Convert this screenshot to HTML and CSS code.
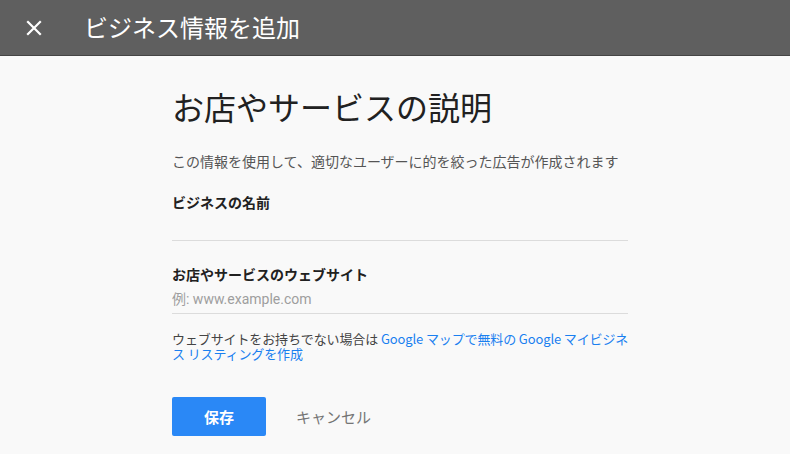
FILE: index.html
```html
<!DOCTYPE html>
<html lang="ja">
<head>
<meta charset="utf-8">
<link rel="stylesheet" href="styles.css">
</head>
<body>
<header class="topbar">
  <svg class="close" width="16" height="16" viewBox="0 0 16 16"><path d="M2 2L14 14M14 2L2 14" stroke="#fff" stroke-width="2.2" stroke-linecap="square"/></svg>
  <div class="topbar-title">ビジネス情報を追加</div>
</header>
<main class="form">
  <h1 class="heading">お店やサービスの説明</h1>
  <p class="lead">この情報を使用して、適切なユーザーに的を絞った広告が作成されます</p>
  <label class="label">ビジネスの名前</label>
  <input class="field field-name" type="text">
  <label class="label label-2">お店やサービスのウェブサイト</label>
  <input class="field field-url" type="text" placeholder="例: www.example.com">
  <p class="help">ウェブサイトをお持ちでない場合は <a class="link" href="#">Google マップで無料の Google マイビジネ<br>ス リスティングを作成</a></p>
  <div class="actions">
    <button class="btn-save">保存</button>
    <button class="btn-cancel">キャンセル</button>
  </div>
</main>
</body>
</html>
```
FILE: styles.css
```css
html, body {
  margin: 0;
  padding: 0;
  background: #f9f9f9;
  font-family: Roboto, "Noto Sans CJK JP", sans-serif;
  width: 790px;
  height: 454px;
  overflow: hidden;
}
.topbar {
  height: 55px;
  background: #5f5f5f;
  border-bottom: 1px solid #454545;
  display: flex;
  align-items: center;
}
.close {
  margin-left: 26px;
  flex: none;
}
.topbar-title {
  margin-left: 42px;
  color: #fff;
  font-size: 24px;
  font-weight: 400;
  line-height: 30px;
  margin-top: -2px;
  font-family: "Noto Sans CJK JP", sans-serif;
}
.form {
  margin-left: 172px;
  width: 456px;
  padding-top: 30px;
  display: flex;
  flex-direction: column;
}
.heading {
  margin: 0;
  font-size: 32px;
  line-height: 40px;
  font-weight: 400;
  color: #212121;
  font-family: "Noto Sans CJK JP", sans-serif;
}
.lead {
  margin: 26px 0 0;
  font-size: 14px;
  line-height: 20px;
  color: #555;
}
.label {
  margin-top: 21px;
  font-size: 14px;
  line-height: 20px;
  font-weight: 700;
  color: #212121;
}
.label-2 {
  margin-top: 24px;
}
.field {
  display: block;
  box-sizing: border-box;
  width: 456px;
  border: none;
  border-bottom: 1px solid #dcdcdc;
  background: transparent;
  padding: 0;
  margin: 0;
  font-family: Roboto, "Noto Sans CJK JP", sans-serif;
  font-size: 14px;
  color: #212121;
  outline: none;
}
.field-name {
  height: 28px;
}
.field-url {
  height: 29px;
}
.field::placeholder {
  color: #9e9e9e;
}
.help {
  margin: 17px 0 0;
  font-size: 13px;
  line-height: 15px;
  letter-spacing: -0.12px;
  color: #444;
  white-space: nowrap;
  font-family: "Noto Sans CJK JP", sans-serif;
}
.link {
  color: #1a80f0;
  text-decoration: none;
}
.actions {
  margin-top: 36px;
  display: flex;
  align-items: center;
}
.btn-save {
  width: 94px;
  height: 39px;
  border: none;
  border-radius: 2px;
  background: #2a88f6;
  color: #fff;
  font-family: "Noto Sans CJK JP", sans-serif;
  font-size: 15px;
  font-weight: 700;
  padding: 0;
}
.btn-cancel {
  margin-left: 30px;
  border: none;
  background: transparent;
  padding: 0;
  color: #757575;
  font-family: "Noto Sans CJK JP", sans-serif;
  font-size: 15px;
}
```
